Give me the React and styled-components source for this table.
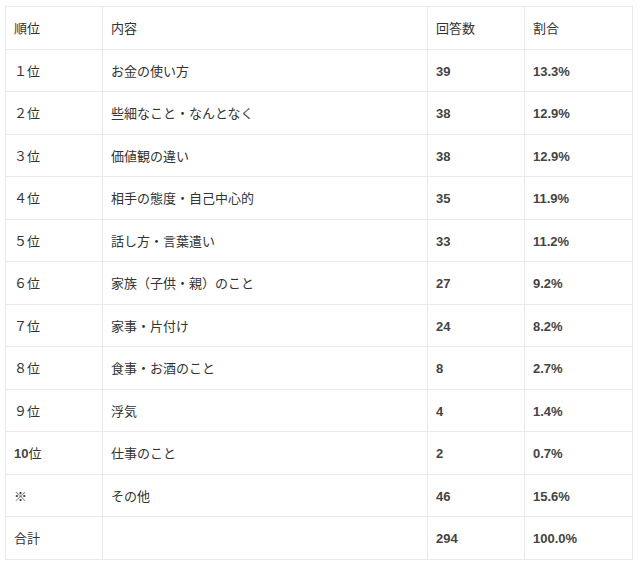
import styled, { createGlobalStyle } from "styled-components";

const GlobalStyle = createGlobalStyle`
    body{
        margin: 0;
        background: #fff;
        font-family: "Noto Sans CJK JP", "Liberation Sans", sans-serif;
    }
`

const Page = styled.div`
    padding: 6px 0 0 5px;
`

const Table = styled.table`
    border-collapse: collapse;
    table-layout: fixed;
    width: 627px;
`

const Row = styled.tr`
    height: 42.5px;
`

const Cell = styled.td`
    border: 1px solid #e9e9e9;
    padding: 0 8px;
    font-size: 13px;
    color: #333;
    vertical-align: middle;
    white-space: nowrap;
`

const Num = styled.span`
    font-family: "Liberation Sans", sans-serif;
    font-weight: 700;
    color: #444;
`

const rows = [
    ["１位", "お金の使い方", "39", "13.3%"],
    ["２位", "些細なこと・なんとなく", "38", "12.9%"],
    ["３位", "価値観の違い", "38", "12.9%"],
    ["４位", "相手の態度・自己中心的", "35", "11.9%"],
    ["５位", "話し方・言葉遣い", "33", "11.2%"],
    ["６位", "家族（子供・親）のこと", "27", "9.2%"],
    ["７位", "家事・片付け", "24", "8.2%"],
    ["８位", "食事・お酒のこと", "8", "2.7%"],
    ["９位", "浮気", "4", "1.4%"],
    [<><Num>10</Num>位</>, "仕事のこと", "2", "0.7%"],
    ["※", "その他", "46", "15.6%"],
    ["合計", "", "294", "100.0%"],
];

export default function App() {
    return (
        <>
            <GlobalStyle />
            <Page>
                <Table>
                    <colgroup>
                        <col style={{ width: 97 }} />
                        <col style={{ width: 325 }} />
                        <col style={{ width: 97 }} />
                        <col style={{ width: 108 }} />
                    </colgroup>
                    <tbody>
                        <Row>
                            <Cell>順位</Cell>
                            <Cell>内容</Cell>
                            <Cell>回答数</Cell>
                            <Cell>割合</Cell>
                        </Row>
                        {rows.map((r, i) => (
                            <Row key={i}>
                                <Cell>{r[0]}</Cell>
                                <Cell>{r[1]}</Cell>
                                <Cell><Num>{r[2]}</Num></Cell>
                                <Cell><Num>{r[3]}</Num></Cell>
                            </Row>
                        ))}
                    </tbody>
                </Table>
            </Page>
        </>
    );
}
